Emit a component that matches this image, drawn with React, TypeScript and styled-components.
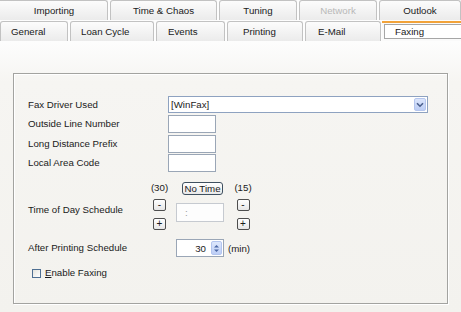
import React from 'react';
import styled, { createGlobalStyle } from 'styled-components';

const GlobalStyle = createGlobalStyle`
    html, body {
        margin: 0;
        padding: 0;
    }
    body {
        font-family: "Liberation Sans", Arial, sans-serif;
        font-size: 9.7px;
        color: #1a1a1a;
        background: #f4f3ef;
    }
`;

const Window = styled.div`
    width: 461px;
    height: 312px;
    overflow: hidden;
    display: flex;
    flex-direction: column;
    background: #fdfdfd;
`;

const TabRow = styled.div<{ $offset: number }>`
    display: flex;
    gap: 2px;
    height: 21px;
    margin-left: ${p => p.$offset}px;
    flex: none;
`;

const Tab = styled.div<{ $w: number, $pl?: number, $disabled?: boolean }>`
    flex: none;
    box-sizing: border-box;
    width: ${p => p.$w}px;
    height: 20px;
    border: 1px solid #c2c2c2;
    border-bottom: none;
    border-radius: 3px 3px 0 0;
    background: linear-gradient(#fcfcfc, #ebebeb);
    display: flex;
    align-items: center;
    justify-content: ${p => p.$pl !== undefined ? 'flex-start' : 'center'};
    padding-left: ${p => p.$pl ?? 0}px;
    color: ${p => p.$disabled ? '#b8b8b8' : '#202020'};
    white-space: nowrap;
`;

const ActiveTab = styled.div<{ $w: number }>`
    flex: none;
    box-sizing: border-box;
    width: ${p => p.$w}px;
    height: 20px;
    margin-left: -1px;
    border-top: 2px solid #f2a33a;
    background: #fafafa;
    padding: 1px 0 2px 2px;
    display: flex;
`;

const FocusBox = styled.div`
    flex: 1;
    border: 1px solid #a6a6a6;
    background: #ffffff;
    display: flex;
    align-items: center;
    padding-left: 10px;
`;

const Panel = styled.div`
    flex: 1;
    background: linear-gradient(#fdfdfd 0, #f6f5f2 40px, #f3f2ee 100%);
    padding: 31px 0 0 13px;
`;

const GroupBox = styled.div`
    box-sizing: border-box;
    width: 435px;
    height: 231px;
    border: 1px solid #a3a3a0;
    box-shadow: 1px 1px 0 #ffffff, inset 1px 1px 0 #ffffff;
    padding: 22px 0 0 14px;
    display: flex;
    flex-direction: column;
`;

const FieldRow = styled.div<{ $mt?: number, $h: number }>`
    display: flex;
    align-items: center;
    height: ${p => p.$h}px;
    margin-top: ${p => p.$mt ?? 0}px;
`;

const Label = styled.div<{ $w: number }>`
    flex: none;
    width: ${p => p.$w}px;
    line-height: 12px;
    white-space: nowrap;
`;

const TopLabel = styled(Label)`
    align-self: flex-start;
    margin-top: 22px;
`;

const Combo = styled.div`
    box-sizing: border-box;
    width: 260px;
    height: 17px;
    border: 1px solid #8ea2c0;
    background: #ffffff;
    display: flex;
    align-items: center;
    padding: 1px;
`;

const ComboText = styled.div`
    flex: 1;
    padding-left: 1px;
`;

const DropButton = styled.div`
    width: 12px;
    height: 13px;
    border-radius: 2px;
    background: linear-gradient(#dbe5fb, #bccdf5);
    border: 1px solid #b5c6ee;
    box-sizing: border-box;
    display: flex;
    align-items: center;
    justify-content: center;
`;

const TextField = styled.div<{ $w?: number, $h?: number }>`
    box-sizing: border-box;
    width: ${p => p.$w ?? 48}px;
    height: ${p => p.$h ?? 18}px;
    border: 1px solid #9aa6b6;
    background: #ffffff;
`;

const Cluster = styled.div`
    display: flex;
    height: 48px;
`;

const SideCol = styled.div<{ $w: number, $ml?: number }>`
    width: ${p => p.$w}px;
    margin-left: ${p => p.$ml ?? 0}px;
    display: flex;
    flex-direction: column;
    align-items: center;
`;

const Caption = styled.div`
    line-height: 12px;
    white-space: nowrap;
`;

const StepButton = styled.div<{ $mt: number }>`
    box-sizing: border-box;
    width: 13px;
    height: 12px;
    margin-top: ${p => p.$mt}px;
    border: 1px solid #4e4e4e;
    border-radius: 2px;
    background: linear-gradient(#ffffff, #e6e6e6);
    display: flex;
    align-items: center;
    justify-content: center;
    font-size: 10px;
    line-height: 10px;
`;

const CenterCol = styled.div`
    width: 48px;
    margin-left: 9px;
    display: flex;
    flex-direction: column;
`;

const NoTimeButton = styled.div`
    box-sizing: border-box;
    width: 41px;
    height: 13px;
    margin: 0 0 0 6px;
    border: 1px solid #3f5060;
    border-radius: 3px;
    background: linear-gradient(#ffffff, #e9e9e9);
    display: flex;
    align-items: center;
    justify-content: center;
    line-height: 11px;
    white-space: nowrap;
`;

const TimeField = styled.div`
    box-sizing: border-box;
    width: 48px;
    height: 19px;
    margin-top: 8px;
    border: 1px solid #c6cad0;
    background: #fdfdfd;
    color: #9a9a9a;
    display: flex;
    align-items: center;
    padding-left: 8px;
`;

const SpinField = styled.div`
    box-sizing: border-box;
    width: 48px;
    height: 18px;
    border: 1px solid #9aa6b6;
    background: #ffffff;
    display: flex;
    align-items: center;
    justify-content: flex-end;
    padding-right: 1px;
`;

const SpinButton = styled.div`
    box-sizing: border-box;
    width: 11px;
    height: 14px;
    margin-left: 5px;
    border: 1px solid #b3c5ef;
    border-radius: 2px;
    background: linear-gradient(#dde7fc, #bdcef6);
    display: flex;
    align-items: center;
    justify-content: center;
`;

const Unit = styled.div`
    margin-left: 4px;
`;

const Check = styled.div`
    box-sizing: border-box;
    width: 9px;
    height: 9px;
    margin-left: 4px;
    border: 1px solid #4f6f92;
    background: linear-gradient(135deg, #e4e4de, #ffffff);
`;

const CheckLabel = styled.div`
    margin-left: 4px;
    line-height: 12px;

    u {
        text-decoration: underline;
    }
`;

const topTabs = [
    { text: 'Importing', w: 130 },
    { text: 'Time & Chaos', w: 107 },
    { text: 'Tuning', w: 78 },
    { text: 'Network', w: 78, disabled: true },
    { text: 'Outlook', w: 82 },
];

const bottomTabs = [
    { text: 'General', w: 68, pl: 10 },
    { text: 'Loan Cycle', w: 84, pl: 10 },
    { text: 'Events', w: 69, pl: 11 },
    { text: 'Printing', w: 76, pl: 15 },
    { text: 'E-Mail', w: 76, pl: 12 },
];

const Chevron = () => (
    <svg width="8" height="6" viewBox="0 0 8 6">
        <path d="M1 1.2 L4 4.2 L7 1.2" fill="none" stroke="#4a5f8c" strokeWidth="1.6" />
    </svg>
);

const SpinArrows = () => (
    <svg width="7" height="11" viewBox="0 0 7 11">
        <path d="M1 4.5 L3.5 2 L6 4.5 Z" fill="#4b67a4" />
        <path d="M1 6.5 L3.5 9 L6 6.5 Z" fill="#4b67a4" />
    </svg>
);

const App = () => {
    return (
        <Window>
            <GlobalStyle />
            <TabRow $offset={-22}>
                {topTabs.map(tab => (
                    <Tab key={tab.text} $w={tab.w} $disabled={tab.disabled}
                        style={tab.text === 'Importing' ? { paddingLeft: 22 } : undefined}>
                        {tab.text}
                    </Tab>
                ))}
            </TabRow>
            <TabRow $offset={0}>
                {bottomTabs.map(tab => (
                    <Tab key={tab.text} $w={tab.w} $pl={tab.pl}>{tab.text}</Tab>
                ))}
                <ActiveTab $w={80}>
                    <FocusBox>Faxing</FocusBox>
                </ActiveTab>
            </TabRow>
            <Panel>
                <GroupBox>
                    <FieldRow $h={17}>
                        <Label $w={140}>Fax Driver Used</Label>
                        <Combo>
                            <ComboText>[WinFax]</ComboText>
                            <DropButton><Chevron /></DropButton>
                        </Combo>
                    </FieldRow>
                    <FieldRow $h={18} $mt={2}>
                        <Label $w={140}>Outside Line Number</Label>
                        <TextField />
                    </FieldRow>
                    <FieldRow $h={18} $mt={2}>
                        <Label $w={140}>Long Distance Prefix</Label>
                        <TextField />
                    </FieldRow>
                    <FieldRow $h={18} $mt={1}>
                        <Label $w={140}>Local Area Code</Label>
                        <TextField />
                    </FieldRow>
                    <FieldRow $h={48} $mt={10}>
                        <TopLabel $w={124}>Time of Day Schedule</TopLabel>
                        <Cluster>
                            <SideCol $w={15}>
                                <Caption>(30)</Caption>
                                <StepButton $mt={5}>-</StepButton>
                                <StepButton $mt={7}>+</StepButton>
                            </SideCol>
                            <CenterCol>
                                <NoTimeButton>No Time</NoTimeButton>
                                <TimeField>:</TimeField>
                            </CenterCol>
                            <SideCol $w={16} $ml={11}>
                                <Caption>(15)</Caption>
                                <StepButton $mt={5}>-</StepButton>
                                <StepButton $mt={7}>+</StepButton>
                            </SideCol>
                        </Cluster>
                    </FieldRow>
                    <FieldRow $h={18} $mt={9}>
                        <Label $w={148}>After Printing Schedule</Label>
                        <SpinField>
                            30
                            <SpinButton><SpinArrows /></SpinButton>
                        </SpinField>
                        <Unit>(min)</Unit>
                    </FieldRow>
                    <FieldRow $h={12} $mt={10}>
                        <Check />
                        <CheckLabel><u>E</u>nable Faxing</CheckLabel>
                    </FieldRow>
                </GroupBox>
            </Panel>
        </Window>
    );
};

export default App;
